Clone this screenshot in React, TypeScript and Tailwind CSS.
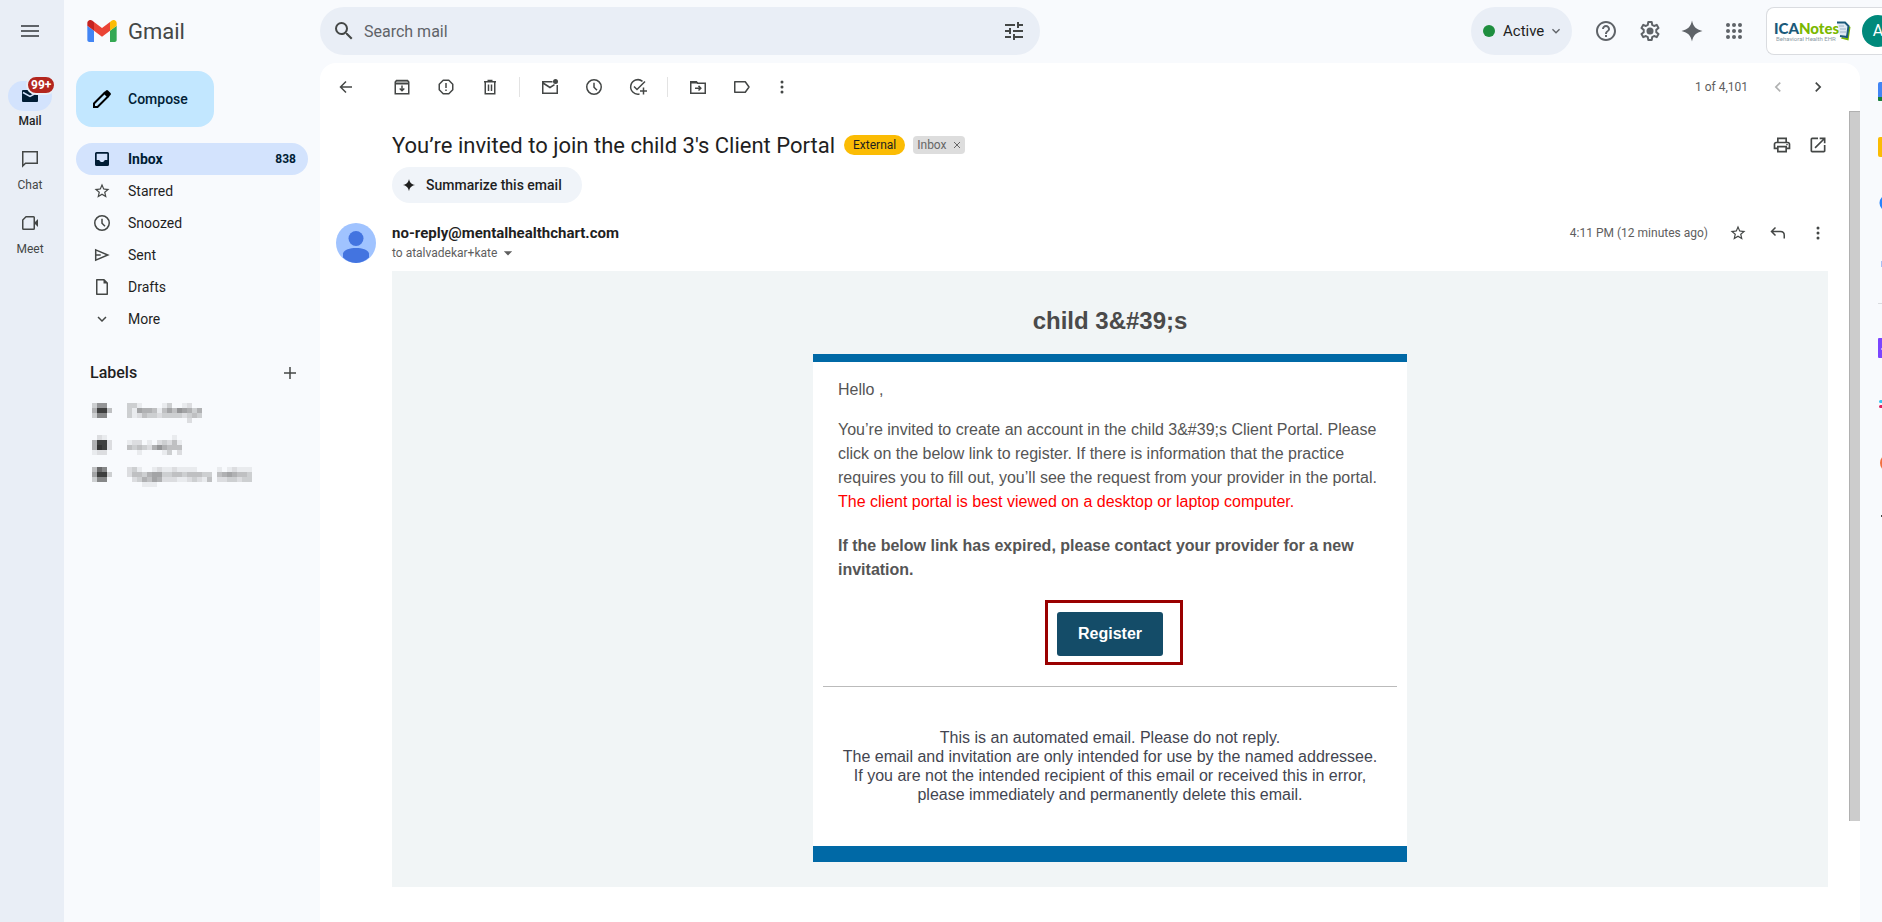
import type { ReactNode } from "react";
import {
  MdArrowDropDown,
  MdChevronLeft,
  MdChevronRight,
  MdExpandMore,
  MdHelpOutline,
  MdOutlineOpenInNew,
  MdOutlinePrint,
  MdSearch,
  MdStarBorder,
  MdTune,
} from "react-icons/md";

function Glyph({ size = 20, children }: { size?: number; children: ReactNode }) {
  return (
    <svg
      width={size}
      height={size}
      viewBox="0 0 20 20"
      fill="none"
      stroke="currentColor"
      strokeWidth="1.5"
      aria-hidden="true"
    >
      {children}
    </svg>
  );
}

const Clock = () => (
  <Glyph>
    <circle cx="10" cy="10" r="7.25" />
    <path d="M10 5.8v4.4l3 3" />
  </Glyph>
);

const MoreVert = () => (
  <Glyph>
    <g fill="currentColor" stroke="none">
      <circle cx="10" cy="5" r="1.5" />
      <circle cx="10" cy="10" r="1.5" />
      <circle cx="10" cy="15" r="1.5" />
    </g>
  </Glyph>
);

const Pencil = () => (
  <svg width="20" height="20" viewBox="0 0 20 20" aria-hidden="true">
    <path d="M2 14.500 12.500 4l3.500 3.500L5.500 18H2z" fill="none" stroke="#000000" strokeWidth="2" />
    <path d="m11.500 4 2.500-2.500q1-1 2 0l2.500 2.500q1 1 0 2L16 8.500z" fill="#000000" />
  </svg>
);

const InboxIcon = () => (
  <svg width="20" height="20" viewBox="0 0 20 20" fill="currentColor" fillRule="evenodd" aria-hidden="true">
    <path d="M4.500 3h11q1.500 0 1.500 1.500v11q0 1.500-1.500 1.500h-11Q3 17 3 15.500v-11Q3 3 4.500 3zM4.700 4.700v6.300H7.300c.4 1.400 1.400 2.100 2.700 2.100s2.300-.7 2.700-2.100h2.600V4.700z" />
  </svg>
);

const Spark = ({ size }: { size: number }) => (
  <svg width={size} height={size} viewBox="0 0 24 24" fill="currentColor" aria-hidden="true">
    <path d="M12 1.500c1.200 6 4 9 10.500 10.500C16 13.500 13.200 16.500 12 22.500 10.800 16.500 8 13.500 1.500 12 8 10.500 10.800 7.500 12 1.500z" />
  </svg>
);

const Gear = () => (
  <svg width="24" height="24" viewBox="0 0 24 24" fill="none" stroke="currentColor" strokeWidth="2" className="shrink-0" aria-hidden="true">
    <path
      strokeLinejoin="round"
      d="M10.300 3h3.400l.5 2.900 1.900 1.100 2.700-1.100 1.700 3-2.200 1.900v2.400l2.200 1.900-1.700 3-2.700-1.100-1.900 1.100-.5 2.900h-3.400l-.5-2.900-1.900-1.100-2.700 1.100-1.700-3 2.200-1.900v-2.400L3.500 8.900l1.700-3L7.900 7l1.900-1.100z"
    />
    <circle cx="12" cy="12" r="3.500" fill="currentColor" stroke="none" />
  </svg>
);

const GmailMark = () => (
  <svg width="30" height="22" viewBox="52 42 88 66" aria-hidden="true">
    <path fill="#4285f4" d="M58 108h14V74L52 59v43c0 3.320 2.690 6 6 6" />
    <path fill="#34a853" d="M120 108h14c3.320 0 6-2.690 6-6V59l-20 15" />
    <path fill="#fbbc04" d="M120 48v26l20-15v-8c0-7.420-8.470-11.650-14.400-7.200" />
    <path fill="#ea4335" d="M72 74V48l24 18 24-18v26L96 92" />
    <path fill="#c5221f" d="M52 51v8l20 15V48l-5.600-4.200c-5.940-4.450-14.400-.22-14.400 7.200" />
  </svg>
);

function IconButton({ label, className = "", children }: { label: string; className?: string; children: ReactNode }) {
  return (
    <button type="button" aria-label={label} className={`flex size-5 shrink-0 items-center justify-center ${className}`}>
      {children}
    </button>
  );
}

// Obscured label rows: every character is the darkness (hex) of one 5px cell
const maskedLabels = [
  {
    icon: ["3770", "5dd4", "3880", "0000"],
    text: ["331000013001200", "316554146476535", "312433233332343", "000000000000200"],
  },
  {
    icon: ["0210", "5dd2", "5ed2", "1220"],
    text: ["00000000010", "12201023241", "43432575444", "00100001302"],
  },
  {
    icon: ["4a80", "6dd3", "3880", "0000"],
    text: [
      "2310012112111100001012111",
      "2443566334434443304565443",
      "0235465222112321402233233",
      "0001110000000000000000000",
    ],
  },
];

function Mosaic({ rows, width }: { rows: string[]; width: number }) {
  return (
    <svg width={width} height="20" fill="#222222" shapeRendering="crispEdges" aria-hidden="true">
      {rows.flatMap((row, y) =>
        [...row].map((cell, x) => (
          <rect key={`${x}-${y}`} x={x * 5} y={y * 5} width="5" height="5" opacity={parseInt(cell, 16) / 15} />
        ))
      )}
    </svg>
  );
}

const folders = [
  { name: "Inbox", icon: <InboxIcon />, count: 838 },
  { name: "Starred", icon: <MdStarBorder size={18} /> },
  { name: "Snoozed", icon: <Clock /> },
  {
    name: "Sent",
    icon: (
      <Glyph>
        <path d="M3.700 4.900 15.800 10 3.700 15.100zM3.700 10h5" />
      </Glyph>
    ),
  },
  {
    name: "Drafts",
    icon: (
      <Glyph>
        <path d="M4.750 2.750h7.250l3.250 3.250v11.250H4.750z" strokeLinejoin="round" />
        <path d="M11.500 2.500v4h4z" fill="currentColor" stroke="none" />
      </Glyph>
    ),
  },
  { name: "More", icon: <MdExpandMore size={18} /> },
];

function Rail() {
  return (
    <nav aria-label="Apps" className="flex w-16 shrink-0 flex-col bg-[#e9eef6] pl-2 text-xs text-[#444746]">
      <button type="button" aria-label="Main menu" className="mt-[21px] flex h-5 w-11 items-center justify-center text-[#5f6368]">
        <svg width="18" height="12" fill="currentColor" aria-hidden="true">
          <path d="M0 0h18v2H0zM0 5h18v2H0zM0 10h18v2H0z" />
        </svg>
      </button>
      <a href="#mail" className="mt-10 flex w-11 flex-col items-center font-bold">
        <span className="relative flex h-[30px] w-11 items-center justify-center rounded-full bg-[#d3e3fd] text-[#001d35]">
          <svg width="16" height="12" viewBox="0 0 16 12" aria-hidden="true">
            <rect width="16" height="12" rx="1" fill="currentColor" />
            <path d="M1 2.500 8 6.500l7-4" fill="none" stroke="#d3e3fd" strokeWidth="1.500" />
          </svg>
          <span className="absolute -top-1.5 left-[18px] rounded-full border-2 border-[#e9eef6] bg-[#b3261e] px-[3px] text-xs leading-4 text-white">
            99+
          </span>
        </span>
        <span className="mt-0.5 leading-4 font-medium text-[#1f1f1f]">Mail</span>
      </a>
      <a href="#chat" className="mt-5 flex w-11 flex-col items-center">
        <Glyph>
          <path d="M2.750 2.750h14.500v11.500H5.500l-2.750 2.750z" />
        </Glyph>
        <span className="mt-2 leading-4">Chat</span>
      </a>
      <a href="#meet" className="mt-5 flex w-11 flex-col items-center">
        <Glyph>
          <path d="M6 3.750h7.500q.75 0 .75.750v11q0 .75-.75.750h-10q-.75 0-.75-.750V7z" strokeLinejoin="round" />
          <path d="m14 10 4-4v8z" fill="currentColor" stroke="none" />
        </Glyph>
        <span className="mt-2 leading-4">Meet</span>
      </a>
    </nav>
  );
}

function Header() {
  return (
    <header className="flex h-[63px] shrink-0 items-start overflow-hidden pt-[7px]">
      <a href="#inbox" className="flex h-12 w-64 shrink-0 items-center gap-[11px] pl-[23px] text-[22px] text-[#444746]">
        <GmailMark />
        Gmail
      </a>
      <form role="search" className="flex h-12 w-[720px] shrink-0 items-center rounded-full bg-[#e9eef6] pr-4 pl-3.5 text-[#444746]">
        <IconButton label="Search">
          <MdSearch size={24} className="shrink-0" />
        </IconButton>
        <input
          type="text"
          aria-label="Search mail"
          placeholder="Search mail"
          className="ml-2.5 h-8 flex-1 bg-transparent text-base outline-none placeholder:text-[#5f6368]"
        />
        <IconButton label="Show search options">
          <MdTune size={24} className="shrink-0" />
        </IconButton>
      </form>
      <div className="ml-auto flex h-12 shrink-0 items-center text-[#5f6368]">
        <button type="button" className="flex h-12 w-[101px] items-center rounded-full bg-[#e9eef6] pl-3 text-[15px] text-[#1f1f1f]">
          <span className="mr-2 size-3 rounded-full bg-[#1e8e3e]" />
          Active
          <MdExpandMore size={16} className="ml-1 text-[#5f6368]" />
        </button>
        <IconButton label="Support" className="ml-6">
          <MdHelpOutline size={24} className="shrink-0" />
        </IconButton>
        <IconButton label="Settings" className="ml-6">
          <Gear />
        </IconButton>
        <IconButton label="Ask Gemini" className="ml-[22px]">
          <span className="shrink-0">
            <Spark size={24} />
          </span>
        </IconButton>
        <IconButton label="Google apps" className="ml-[22px]">
          <svg width="16" height="16" viewBox="0 0 16 16" fill="currentColor" aria-hidden="true">
            {[2, 8, 14].map((y) => [2, 8, 14].map((x) => <circle key={`${x}-${y}`} cx={x} cy={y} r="2" />))}
          </svg>
        </IconButton>
        <div className="ml-[22px] flex h-12 w-[116px] items-center overflow-hidden rounded-l-lg border border-r-0 border-[#dadce0] bg-white pl-[7px]">
          <div className="flex w-[77px] shrink-0 items-start">
            <div className="w-[62px] shrink-0 whitespace-nowrap">
              <p className="font-[Lato,sans-serif] text-[15px] leading-[15px] font-black text-[#1b5a7a]">
                ICA<span className="text-[#7ab800]">Notes</span>
              </p>
              <p className="pl-0.5 text-[6px] leading-[6px] text-[#8a9aa5]">Behavioral Health EHR</p>
            </div>
            <svg width="15" height="20" viewBox="0 0 15 20" aria-hidden="true">
              <path d="m6 16 5 1 1.500-12 2 1-2 13.500L5 17.500z" fill="#7ab800" />
              <path d="M1 1.500h8l3.500 3.500-1.500 11-7-1" fill="#dfe9f2" stroke="#1b5a7a" strokeWidth="2" />
              <path d="M3 5h5M4 8h6M4 11h6" stroke="#9db4c8" />
            </svg>
          </div>
          <button
            type="button"
            aria-label="Account"
            className="ml-[11px] flex size-8 shrink-0 items-center justify-center rounded-full bg-[#00897b] text-base text-white"
          >
            A
          </button>
        </div>
      </div>
    </header>
  );
}

function Sidebar() {
  return (
    <aside className="w-64 shrink-0 px-3 pt-2 text-sm text-[#1f1f1f]">
      <button type="button" className="flex h-14 w-[138px] items-center gap-4 rounded-2xl bg-[#c2e7ff] pl-4 font-medium text-[#001d35]">
        <Pencil />
        Compose
      </button>
      <ul className="mt-4">
        {folders.map(({ name, icon, count }) => (
          <li key={name}>
            <a
              href={`#${name.toLowerCase()}`}
              className={`flex h-8 items-center rounded-full pr-3 pl-4 ${count ? "bg-[#d3e3fd] font-bold text-[#001d35]" : ""}`}
            >
              <span className="mr-4 flex w-5 justify-center text-[#444746]">
                <span className={count ? "text-[#001d35]" : ""}>{icon}</span>
              </span>
              {name}
              {count && <span className="ml-auto text-xs">{count}</span>}
            </a>
          </li>
        ))}
      </ul>
      <div className="mt-[26px] flex h-6 items-center justify-between pr-2 pl-3.5">
        <h2 className="text-base font-medium">Labels</h2>
        <IconButton label="Create new label" className="text-[#444746]">
          <Glyph>
            <path d="M10 4v12M4 10h12" />
          </Glyph>
        </IconButton>
      </div>
      <ul className="mt-[18px] flex flex-col gap-3 pl-4">
        {maskedLabels.map(({ icon, text }) => (
          <li key={text[0]} className="flex h-5 gap-[15px]">
            <Mosaic rows={icon} width={20} />
            <Mosaic rows={text} width={text[0].length * 5} />
          </li>
        ))}
      </ul>
    </aside>
  );
}

function Toolbar() {
  return (
    <div className="flex h-12 items-center pr-8 pl-4 text-[#444746]">
      <IconButton label="Back to Inbox">
        <Glyph>
          <path d="M16 10H4.500M10 4.500 4.500 10l5.500 5.500" />
        </Glyph>
      </IconButton>
      <div className="ml-9 flex gap-6">
        <IconButton label="Archive">
          <Glyph>
            <path d="M4 3.500h12v3H4z" fill="#a3a5a4" stroke="none" />
            <path d="M3.500 6.750h13M4.500 3.500h11l1.250 1.500v11.750H3.250V5zM10 8.500v5M7.700 11.500 10 13.800l2.300-2.300" />
          </Glyph>
        </IconButton>
        <IconButton label="Report spam">
          <Glyph>
            <path d="M7.200 3.250h5.600l3.950 3.950v5.600l-3.950 3.950H7.200L3.250 12.800V7.200z" strokeLinejoin="round" />
            <path d="M10 6v5M10 12.500v1.500" />
          </Glyph>
        </IconButton>
        <IconButton label="Delete">
          <Glyph>
            <path d="M4 4.750h12M7.500 3.500h5M5.250 5v11.750h9.500V5" />
            <path d="M8.500 7.500V14M11.500 7.500V14" />
          </Glyph>
        </IconButton>
      </div>
      <span className="ml-[19px] h-5 w-px bg-[#e3e3e3]" />
      <div className="ml-5 flex gap-6">
        <IconButton label="Mark as unread">
          <Glyph>
            <path d="M12.500 4.750H2.750v11.500h14.500V8M3 6l7 4.500 4.500-2.800" />
            <circle cx="15.500" cy="4.500" r="2.500" fill="currentColor" stroke="none" />
          </Glyph>
        </IconButton>
        <IconButton label="Snooze">
          <Clock />
        </IconButton>
        <IconButton label="Add to Tasks">
          <Glyph>
            <path d="M14.500 4.300A7.250 7.250 0 1 0 11.500 17M6 9.500l3 3 8-8M15.500 10.500v7M12 14h7" />
          </Glyph>
        </IconButton>
      </div>
      <span className="ml-[19px] h-5 w-px bg-[#e3e3e3]" />
      <div className="ml-5 flex items-center">
        <IconButton label="Move to">
          <Glyph>
            <path d="M2.750 4.750h5.500l1.500 1.500h7.500v10H2.750zM7 11.200h5.500M10.500 8.900l2.300 2.300-2.300 2.300" />
            <path d="M2.500 4h6l2 2.500h-8z" fill="currentColor" stroke="none" />
          </Glyph>
        </IconButton>
        <IconButton label="Labels" className="ml-6">
          <Glyph>
            <path d="M2.750 4.750h10.500L17 10l-3.750 5.250H2.750z" strokeLinejoin="round" />
          </Glyph>
        </IconButton>
        <IconButton label="More" className="ml-5">
          <MoreVert />
        </IconButton>
      </div>
      <div className="ml-auto flex items-center gap-5">
        <span className="text-xs text-[#5e5e5e]">1 of 4,101</span>
        <IconButton label="Newer" className="text-[#b0b1b1]">
          <MdChevronLeft size={20} />
        </IconButton>
        <IconButton label="Older">
          <MdChevronRight size={20} />
        </IconButton>
      </div>
    </div>
  );
}

function EmailBody() {
  return (
    <div className="mt-2 ml-14 bg-[#f1f5f6] pt-8 pb-[25px] font-['Liberation_Sans',Arial,sans-serif]">
      <h1 className="text-center text-2xl leading-9 font-bold text-[#4a4a4a]">child 3&amp;#39;s</h1>
      <div className="mx-auto mt-[15px] max-w-[594px] border-t-8 border-b-16 border-[#0069a6] bg-white">
        <div className="px-[25px] pt-4 text-base leading-6 text-[#555555]">
          <p>Hello ,</p>
          <p className="mt-4">
            You’re invited to create an account in the child 3&amp;#39;s Client Portal. Please click on the below link to
            register. If there is information that the practice requires you to fill out, you’ll see the request from
            your provider in the portal.{" "}
            <span className="text-[#ff0000]">The client portal is best viewed on a desktop or laptop computer.</span>
          </p>
          <p className="mt-5 font-bold">
            If the below link has expired, please contact your provider for a new invitation.
          </p>
        </div>
        <div className="mt-[30px] flex justify-center">
          <div className="relative">
            <a
              href="#register"
              className="flex h-11 w-[106px] items-center justify-center rounded-[3px] bg-[#144c68] text-base font-bold text-white"
            >
              Register
            </a>
            <span className="pointer-events-none absolute -top-3 -right-5 -bottom-[9px] -left-3 border-3 border-[#990000]" />
          </div>
        </div>
        <hr className="mx-2.5 mt-[30px] border-[#bbbbbb]" />
        <p className="mt-[41px] mb-[42px] text-center text-base leading-[19px] text-[#434550]">
          This is an automated email. Please do not reply.
          <br />
          The email and invitation are only intended for use by the named addressee.
          <br />
          If you are not the intended recipient of this email or received this in error,
          <br />
          please immediately and permanently delete this email.
        </p>
      </div>
    </div>
  );
}

function Message() {
  return (
    <article className="min-w-0 flex-1 overflow-hidden pr-[21px] pl-4">
      <div className="mt-3.5 flex h-10 items-center pl-14">
        <h1 className="text-[22px] text-[#1f1f1f]">You’re invited to join the child 3's Client Portal</h1>
        <span className="ml-[9px] rounded-full bg-[#fbbc04] px-[9px] text-xs leading-5 text-[#1f1f1f]">External</span>
        <span className="ml-2 flex h-[18px] items-center rounded bg-[#dddddd] px-1 text-xs text-[#666666]">
          Inbox
          <button type="button" aria-label="Remove label Inbox" className="ml-1.5 p-px">
            <svg width="6" height="6" viewBox="0 0 6 6" stroke="currentColor" aria-hidden="true">
              <path d="m0 0 6 6M6 0 0 6" />
            </svg>
          </button>
        </span>
        <div className="ml-auto flex gap-4 text-[#444746]">
          <IconButton label="Print all">
            <MdOutlinePrint size={20} />
          </IconButton>
          <IconButton label="In new window">
            <MdOutlineOpenInNew size={20} />
          </IconButton>
        </div>
      </div>
      <button
        type="button"
        className="mt-0.5 ml-14 flex h-9 items-center gap-2.5 rounded-full bg-[#f0f4f9] pr-5 pl-[10px] text-sm font-medium text-[#1f1f1f]"
      >
        <Spark size={14} />
        Summarize this email
      </button>
      <div className="mt-5 flex h-10">
        <svg width="40" height="40" viewBox="0 0 40 40" className="mr-4 shrink-0" role="img" aria-label="Sender">
          <circle cx="20" cy="20" r="20" fill="#a0c3ff" />
          <circle cx="20" cy="15.500" r="7.500" fill="#4374e0" />
          <path d="M7 34.500v-4C8 26.500 14 25 20 25s12 1.500 13 5.500v4A20 20 0 0 1 20 40 20 20 0 0 1 7 34.500z" fill="#4374e0" />
        </svg>
        <div>
          <h3 className="text-[15px] leading-5 font-bold text-[#1f1f1f]">no-reply@mentalhealthchart.com</h3>
          <button type="button" className="flex h-5 items-center text-xs text-[#5e5e5e]">
            to atalvadekar+kate
            <MdArrowDropDown size={20} className="ml-px" />
          </button>
        </div>
        <div className="ml-auto flex h-5 items-center gap-5 text-[#444746]">
          <span className="text-xs text-[#5e5e5e]">4:11 PM (12 minutes ago)</span>
          <IconButton label="Star">
            <MdStarBorder size={18} />
          </IconButton>
          <IconButton label="Reply">
            <Glyph>
              <path d="M7.500 4.500 3.500 8.500l4 4M3.500 8.500h9q3.750 0 3.750 3.750v3.250" />
            </Glyph>
          </IconButton>
          <IconButton label="More message options">
            <MoreVert />
          </IconButton>
        </div>
      </div>
      <EmailBody />
    </article>
  );
}

function SidePanel() {
  return (
    <aside aria-label="Side panel" className="w-[22px] shrink-0 overflow-hidden pl-[18px]">
      <div className="w-5">
        {/* Calendar, Keep, Tasks, Contacts */}
        <svg width="20" height="240" viewBox="0 0 20 240" aria-hidden="true">
          <rect y="19" width="20" height="19" rx="2" fill="#4285f4" />
          <path d="M0 34h20v4H1q-1 0-1-1z" fill="#188038" />
          <rect y="74" width="20" height="20" rx="2" fill="#fbbc04" />
          <circle cx="10" cy="140" r="8.500" fill="#2684fc" />
          <rect x="3" y="198" width="14" height="6" fill="#a8c0f5" />
        </svg>
        <hr className="border-[#dadce0]" />
        {/* Installed add-ons */}
        <svg width="20" height="240" viewBox="0 0 20 240" aria-hidden="true">
          <rect y="34" width="20" height="20" rx="1" fill="#7b45ff" />
          <path d="M3 45h14" stroke="#ffffff" />
          <rect x="1" y="96" width="18" height="3" rx="1.500" fill="#36c5f0" />
          <rect x="1" y="101" width="18" height="3" rx="1.500" fill="#e01e5a" />
          <circle cx="11" cy="159" r="9" fill="#f2703f" />
          <path d="M3 212h14M10 205v14" stroke="#444746" strokeWidth="2" />
        </svg>
      </div>
    </aside>
  );
}

export default function App() {
  return (
    <div className="flex h-screen overflow-hidden bg-[#f8fafd] font-[Roboto,sans-serif]">
      <Rail />
      <div className="flex min-w-0 flex-1 flex-col">
        <Header />
        <div className="flex min-h-0 flex-1">
          <Sidebar />
          <main className="flex min-w-0 flex-1 flex-col overflow-hidden rounded-t-2xl bg-white">
            <Toolbar />
            <div className="flex min-h-0 flex-1">
              <Message />
              <div className="h-7/8 w-[11px] shrink-0 border-t border-l border-[#b0b0b0] bg-[#cccccc]" />
            </div>
          </main>
          <SidePanel />
        </div>
      </div>
    </div>
  );
}
